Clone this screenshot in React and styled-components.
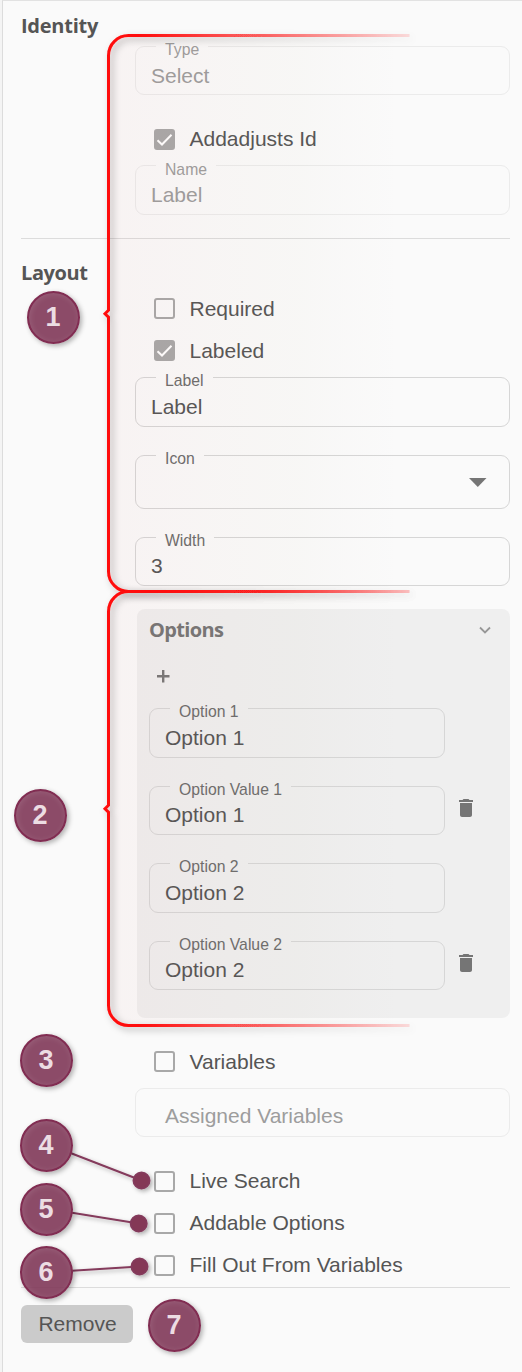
import React from "react";
import styled, { createGlobalStyle } from "styled-components";

const Global = createGlobalStyle`
  * { box-sizing: border-box; }
  body {
    margin: 0;
    background: #fafafa;
    color: #555;
    font-family: "Liberation Sans", Arial, sans-serif;
    font-size: 21px;
  }
`;

const Page = styled.div`
  position: relative;
  width: 522px;
  height: 1372px;
  padding-left: 2px;
  background: #f4f4f4;
  overflow: hidden;
`;

const Panel = styled.main`
  height: 100%;
  padding: 0 12px 0 18px;
  display: flex;
  flex-direction: column;
  background: #fafafa;
  border-top: 1px solid #e2e2e2;
  border-left: 1px solid #dcdcdc;
`;

const Section = styled.section`
  display: flex;
  flex-direction: column;
  padding-left: 114px;
  margin-top: ${(p) => p.$top ?? 0}px;
`;

const Heading = styled.h2`
  margin: ${(p) => p.$top ?? 0}px 0 0;
  height: 28px;
  line-height: 28px;
  font-family: "Open Sans", "Noto Sans", sans-serif;
  font-size: 20px;
  font-weight: 700;
  letter-spacing: ${(p) => p.$track ?? 0}px;
  color: ${(p) => p.$color || "#555"};
`;

const Divider = styled.hr`
  width: 100%;
  height: 1px;
  margin: ${(p) => p.$top}px 0 0;
  border: 0;
  background: #dcdcdc;
`;

const FieldBox = styled.fieldset`
  width: 100%;
  min-width: 0;
  height: ${(p) => p.$height}px;
  margin: ${(p) => p.$top}px 0 0;
  padding: 0 ${(p) => p.$pad}px;
  display: block;
  border: 1px solid ${(p) => (p.$disabled ? "#ebebeb" : "#d6d6d6")};
  border-radius: 9px;
  color: ${(p) => (p.$disabled ? "#9d9d9d" : "#555")};
`;

const Legend = styled.legend`
  height: 1px;
  margin-left: 5px;
  padding: 0 9px;
  font-size: 15.75px;
  line-height: ${(p) => p.$line}px;
  color: ${(p) => (p.$disabled ? "#9d9d9d" : "#6c6c6c")};
`;

const FieldRow = styled.div`
  display: flex;
  justify-content: space-between;
  height: 24px;
  margin-top: ${(p) => p.$offset}px;
  line-height: 24px;
  white-space: nowrap;
`;

const CheckRow = styled.label`
  display: flex;
  align-items: center;
  height: 42px;
  margin-top: ${(p) => p.$top ?? 0}px;
  padding-left: 19px;
  gap: 14.5px;
  white-space: nowrap;
`;

const CheckText = styled.span`
  padding-top: ${(p) => (p.$low ? 2 : 0)}px;
`;

const CheckBox = styled.span`
  display: flex;
  width: 21px;
  height: 21px;
  border-radius: 3px;
  border: 2px solid #a8a8a8;
  background: ${(p) => (p.$checked ? "#a8a8a8" : "transparent")};
`;

const OptionsCard = styled.div`
  display: flex;
  flex-direction: column;
  height: 409px;
  margin: 23px 0 0 2px;
  padding: 0 12px;
  border-radius: 8px;
  background: #efefef;
`;

const CardHeader = styled.div`
  display: flex;
  justify-content: space-between;
  padding: 7px 6px 0 0;
`;

const AddIcon = styled.svg`
  width: 14px;
  height: 14px;
  margin: 25px 0 0 7px;
`;

const OptionRow = styled.div`
  display: grid;
  grid-template-columns: 296px 24px;
  column-gap: 9px;
  margin-top: ${(p) => p.$top}px;
`;

const TrashIcon = styled.svg`
  width: 24px;
  height: 24px;
  margin-top: 10px;
  fill: #757575;
`;

const RemoveButton = styled.button`
  width: 112px;
  height: 38px;
  margin-top: 17px;
  padding: 0 0 0 1px;
  border: 0;
  border-radius: 6px;
  background: #cbcbcb;
  color: #555;
  font: inherit;
`;

const Annotations = styled.svg`
  position: absolute;
  inset: 0;
  pointer-events: none;
`;

const Badge = styled.div`
  position: absolute;
  left: ${(p) => p.$x - 26.5}px;
  top: ${(p) => p.$y - 26.5}px;
  width: 53px;
  height: 53px;
  border: 2px solid #812d52;
  border-radius: 50%;
  background: rgba(128, 55, 88, 0.9);
  box-shadow: 2px 2px 5px rgba(0, 0, 0, 0.3), inset 1px 1px 6px rgba(255, 255, 255, 0.12);
  color: #ecdde3;
  font-size: 27px;
  font-weight: 700;
  line-height: 49px;
  text-align: center;
`;

function Field({ label, value, top, height = 49, offset = 17, disabled, pad = 15, legendLine = 7, icon }) {
  return (
    <FieldBox $top={top} $height={height} $disabled={disabled} $pad={pad}>
      {label && <Legend $disabled={disabled} $line={legendLine}>{label}</Legend>}
      <FieldRow $offset={offset}>
        <span>{value}</span>
        {icon}
      </FieldRow>
    </FieldBox>
  );
}

function Check({ label, checked, top, low }) {
  return (
    <CheckRow $top={top}>
      <CheckBox $checked={checked}>
        {checked && (
          <svg width="17" height="17" viewBox="0 0 17 17" fill="none" stroke="#fff" strokeWidth="2">
            <path d="M1.5 9.2 6 13.5 15.5 3.7" />
          </svg>
        )}
      </CheckBox>
      <CheckText $low={low}>{label}</CheckText>
    </CheckRow>
  );
}

function Trash() {
  return (
    <TrashIcon viewBox="0 0 24 24">
      <path d="M6 19c0 1.1.9 2 2 2h8c1.1 0 2-.9 2-2V7H6v12zM19 4h-3.5l-1-1h-5l-1 1H5v2h14V4z" />
    </TrashIcon>
  );
}

const bracket = (top, tip, bottom) =>
  `M409.5 ${top}H128.5A20 20 0 0 0 108.5 ${top + 20}V${tip - 3.5}L105 ${tip}L108.5 ${tip + 3.5}V${bottom - 20}A20 20 0 0 0 128.5 ${bottom}H409.5`;

const brackets = [
  [35.5, 313.7, 591.5],
  [591.5, 808.7, 1025.5],
];

const pointers = [
  { x1: 70.5, y1: 1153, x2: 141.5, y2: 1180.5 },
  { x1: 72, y1: 1212.7, x2: 138.7, y2: 1223.5 },
  { x1: 72, y1: 1270.7, x2: 139.5, y2: 1266.5 },
];

const badges = [
  [53, 317],
  [40, 815],
  [46, 1060],
  [46, 1145],
  [46, 1209],
  [46, 1272],
  [174, 1325],
];

export default function App() {
  return (
    <Page>
      <Global />
      <Panel>
        <Heading $top={11} $track={-0.25}>Identity</Heading>
        <Section $top={6}>
          <Field label="Type" value="Select" top={0} disabled />
          <Check label="Addadjusts Id" checked top={23} />
          <Field label="Name" value="Label" top={5} height={50} legendLine={9} disabled />
        </Section>
        <Divider $top={23} />
        <Heading $top={20} $track={-0.4}>Layout</Heading>
        <Section>
          <Check label="Required" low />
          <Check label="Labeled" checked low />
          <Field label="Label" value="Label" top={6} height={50} />
          <Field
            label="Icon"
            top={28}
            height={54}
            icon={
              <svg width="33" height="24" viewBox="0 0 33 24" fill="#757575">
                <path d="M8 5h17.5L16.8 14z" />
              </svg>
            }
          />
          <Field label="Width" value="3" top={28} offset={16} />
          <OptionsCard>
            <CardHeader>
              <Heading $color="#757575" $track={-0.65}>Options</Heading>
              <svg width="14" height="28" viewBox="0 0 14 28" fill="none" stroke="#979797" strokeWidth="1.8">
                <path d="M2 11.5 7 16.5 12 11.5" />
              </svg>
            </CardHeader>
            <AddIcon viewBox="0 0 14 14" stroke="#777" strokeWidth="2.4">
              <path d="M7.2 1v12.6M1 7.3h12.5" />
            </AddIcon>
            <OptionRow $top={25}>
              <Field label="Option 1" value="Option 1" top={0} height={50} />
            </OptionRow>
            <OptionRow $top={28}>
              <Field label="Option Value 1" value="Option 1" top={0} offset={16} />
              <Trash />
            </OptionRow>
            <OptionRow $top={28}>
              <Field label="Option 2" value="Option 2" top={0} height={50} />
            </OptionRow>
            <OptionRow $top={28}>
              <Field label="Option Value 2" value="Option 2" top={0} offset={16} />
              <Trash />
            </OptionRow>
          </OptionsCard>
          <Check label="Variables" top={22} low />
          <Field value="Assigned Variables" top={6} offset={15} pad={29} disabled />
          <Check label="Live Search" top={23} />
          <Check label="Addable Options" />
          <Check label="Fill Out From Variables" />
        </Section>
        <Divider $top={1} />
        <RemoveButton>Remove</RemoveButton>
      </Panel>

      <Annotations width="522" height="1372" viewBox="0 0 522 1372">
        <defs>
          <linearGradient id="edge" gradientUnits="userSpaceOnUse" x1="108" y1="0" x2="410" y2="0">
            <stop offset="0" stopColor="#ff0a0a" />
            <stop offset="0.1" stopColor="#ff0a0a" />
            <stop offset="1" stopColor="#ff0a0a" stopOpacity="0.12" />
          </linearGradient>
          <linearGradient id="wash" gradientUnits="userSpaceOnUse" x1="108" y1="0" x2="400" y2="0">
            <stop offset="0" stopColor="#c85a5a" stopOpacity="0.045" />
            <stop offset="0.65" stopColor="#b4a078" stopOpacity="0.035" />
            <stop offset="1" stopColor="#c8a0a0" stopOpacity="0" />
          </linearGradient>
          <filter id="shade" filterUnits="userSpaceOnUse" x="80" y="10" width="360" height="1050">
            <feDropShadow dx="3" dy="3" stdDeviation="3.5" floodColor="#000" floodOpacity="0.3" />
          </filter>
          <filter id="dotShade" filterUnits="userSpaceOnUse" x="50" y="1130" width="130" height="170">
            <feDropShadow dx="2" dy="2" stdDeviation="2" floodColor="#000" floodOpacity="0.3" />
          </filter>
        </defs>
        {brackets.map(([top, tip, bottom]) => (
          <g key={top}>
            <path d={bracket(top, tip, bottom)} fill="url(#wash)" />
            <path d={bracket(top, tip, bottom)} fill="none" stroke="url(#edge)" strokeWidth="3" filter="url(#shade)" />
          </g>
        ))}
        <g filter="url(#dotShade)" stroke="#843a5b" strokeWidth="2" fill="#843757">
          {pointers.map((p) => (
            <g key={p.y1}>
              <line {...p} />
              <circle cx={p.x2} cy={p.y2} r="8" />
            </g>
          ))}
        </g>
      </Annotations>
      {badges.map(([x, y], i) => (
        <Badge key={y} $x={x} $y={y}>
          {i + 1}
        </Badge>
      ))}
    </Page>
  );
}
